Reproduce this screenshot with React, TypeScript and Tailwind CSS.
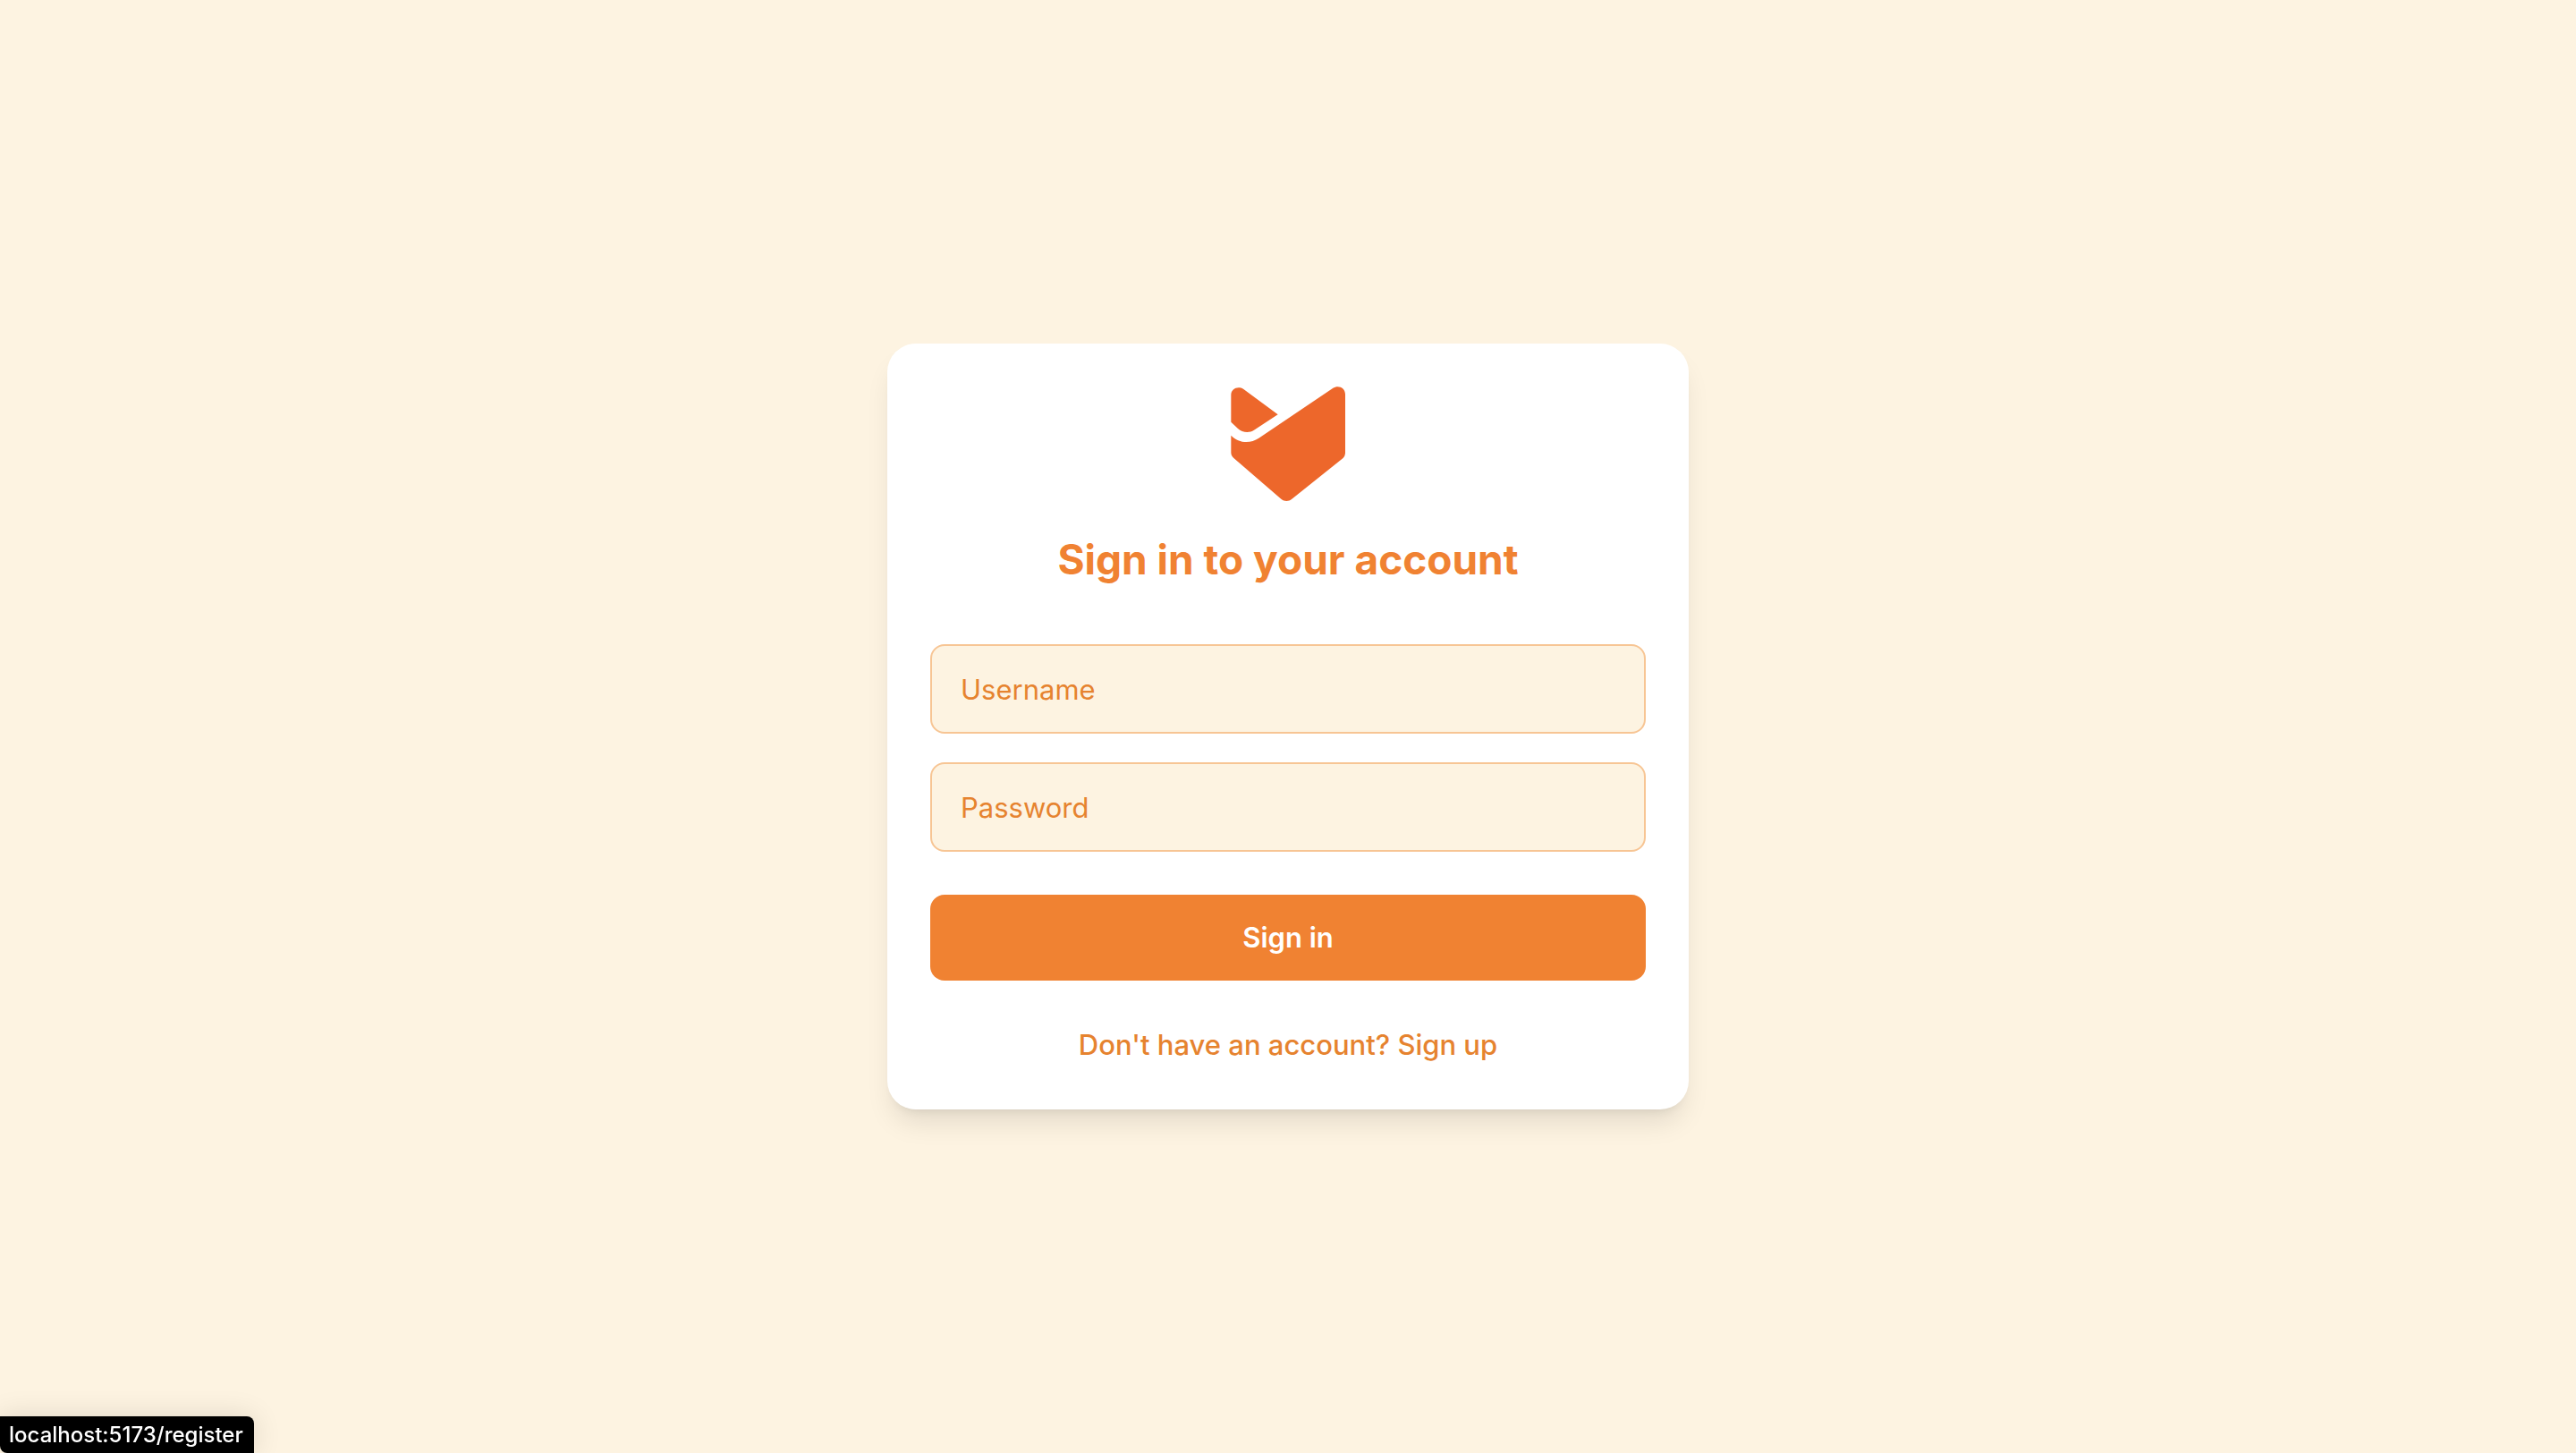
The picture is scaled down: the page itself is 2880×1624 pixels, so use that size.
import React from "react";

function Logo() {
  return (
    <svg viewBox="0 0 384 384" className="size-32 fill-[#ed672b]" aria-hidden="true">
      <path d="M1 28C1 7 24-3 42 8L158 94L78 146C62 157 38 154 24 141L1 119Z" />
      <path d="M384 26V223C384 230 380 238 373 243L205 377C194 386 180 386 169 377L10 240C4 235 1 229 1 222V164C27 191 66 192 94 173L342 6C361-7 384 5 384 26Z" />
    </svg>
  );
}

type FieldProps = { id: string; label: string; type: string; autoComplete: string };

function Field({ id, label, type, autoComplete }: FieldProps) {
  return (
    <input
      id={id}
      name={id}
      type={type}
      aria-label={label}
      autoComplete={autoComplete}
      placeholder={label}
      className="block h-[100px] w-full rounded-2xl border-2 border-[#f7c594] bg-[#fdf3e1] px-8 text-[31px] text-[#e6832f] outline-none placeholder:text-[#e6832f] placeholder:opacity-100"
    />
  );
}

export default function App() {
  return (
    <div className="flex min-h-screen items-center justify-center bg-[#fdf3e1] font-['Inter','Liberation_Sans',sans-serif]">
      <main className="w-full max-w-4xl rounded-4xl bg-white p-12 shadow-[0_20px_30px_-6px_rgba(0,0,0,0.1),0_8px_12px_-8px_rgba(0,0,0,0.1)]">
        <div className="flex justify-center">
          <Logo />
        </div>
        <h1 className="mt-8 text-center text-[46px] leading-[66px] font-bold text-[#f08232]">
          Sign in to your account
        </h1>
        <form className="mt-[62px]" onSubmit={(e: React.FormEvent) => e.preventDefault()}>
          <div className="flex flex-col gap-8">
            <Field id="username" label="Username" type="text" autoComplete="username" />
            <Field id="password" label="Password" type="password" autoComplete="current-password" />
          </div>
          <button
            type="submit"
            className="mt-12 h-24 w-full rounded-2xl bg-[#f08232] text-[31px] font-semibold text-white"
          >
            Sign in
          </button>
        </form>
        <p className="mt-12 text-center text-[31px] leading-[48px] font-medium">
          <a href="/register" className="text-[#e6832f]">
            Don't have an account? Sign up
          </a>
        </p>
      </main>
      <div className="fixed bottom-0 left-0 rounded-tr-lg rounded-bl-lg bg-black pr-3 pl-2.5 text-2xl leading-[41px] font-medium text-white shadow-[0_0_32px_rgba(0,0,0,0.12)]">
        localhost:5173/register
      </div>
    </div>
  );
}
